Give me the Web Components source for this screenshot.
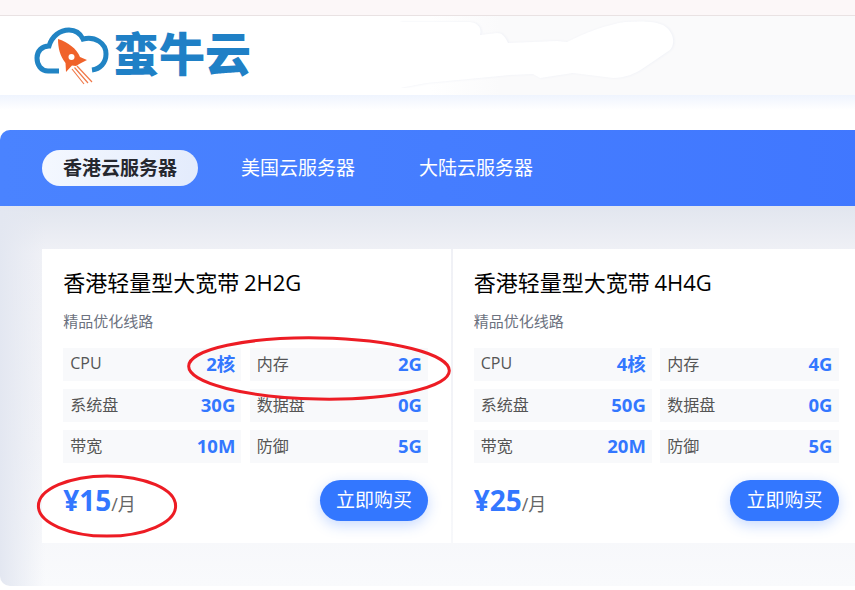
<!DOCTYPE html>
<html lang="zh">
<head>
<meta charset="utf-8">
<title>蛮牛云</title>
<style>
  html, body { margin: 0; padding: 0; background: #fff; overflow: hidden; }
  body { width: 855px; height: 590px; font-family: "Open Sans", "Noto Sans CJK SC", sans-serif; }
</style>
</head>
<body>
<site-header></site-header>
<plan-panel>
  <plan-card slot="cards" name="香港轻量型大宽带 2H2G" cpu="2核" ram="2G" disk="30G" band="10M" price="15"></plan-card>
  <plan-card slot="cards" name="香港轻量型大宽带 4H4G" cpu="4核" ram="4G" disk="50G" band="20M" price="25"></plan-card>
</plan-panel>
<pen-ring tilt="1" style="left:186px;top:335.5px;width:266px;height:65px"></pen-ring>
<pen-ring style="left:37px;top:473.5px;width:140px;height:64px"></pen-ring>

<script>
class SiteHeader extends HTMLElement {
  constructor() {
    super();
    this.shadowDOM = this.attachShadow({ mode: 'open' });
  }
  connectedCallback() {
    this.shadowDOM.innerHTML = `
      <style>
        :host { display: block; position: relative; }
        .strip { height: 15px; background: #fcf7f8; border-bottom: 1px solid #e9e2e3; }
        .bar {
          height: 79px;
          display: flex;
          align-items: flex-start;
          background: linear-gradient(90deg, #fff 0, #fff 430px, #fafafb 500px, #fafafb 100%);
        }
        .logo { display: flex; align-items: flex-start; margin-left: 33px; margin-top: 10px; }
        .logo svg { display: block; }
        .name {
          margin-top: -1px;
          font: 900 46px/52px "Noto Sans CJK SC", sans-serif;
          color: #1f80c6;
          white-space: nowrap;
        }
        .glow { height: 15px; background: linear-gradient(#eff4fe, #fff); }
        .blot { position: absolute; left: 400px; top: 16px; }
      </style>
      <div class="strip"></div>
      <div class="bar">
        <div class="logo">
          <svg width="80" height="60" viewBox="33 26 80 60" fill="none">
            <path d="M59 71H48C41 71 37 65 37 58C37 51 42 46 49 46C52 36 60 30 69 30C75 30 80 33 83 39C95 36 106 43 106 54C106 63 100 69 92 70" stroke="#2184c4" stroke-width="5"/>
            <path d="M58 39C68 42 77 49 80 57L87 60C83 62 79 64 76 66L72 65.5L66 72L65.5 63C60 56 58 48 58 39Z" fill="#f0622a"/>
            <circle cx="71.500" cy="57" r="3" fill="#fff"/>
            <path d="M77 66L92 82M74.500 67.500L88 83M72 69L84 84" stroke="#f0794a" stroke-width="1.2"/>
          </svg>
          <span class="name">蛮牛云</span>
        </div>
      </div>
      <svg class="blot" width="280" height="72" viewBox="400 16 280 72">
        <path d="M400 88L427 83L510 75L533 74L540 78L573 73L613 78C625 78 635 74 645 67L670 50C675 45 675 32 663 25C655 21 640 21 625 22C605 25 585 33 567 42L557 41L508 43C505 36 502 33 497 33L480 35C482 28 478 23 470 22L400 22Z" fill="#fff" style="filter:drop-shadow(1px 0 1px #eef0f6)"/>
      </svg>
      <div class="glow"></div>
    `;
  }
}

class PlanPanel extends HTMLElement {
  constructor() {
    super();
    this.shadowDOM = this.attachShadow({ mode: 'open' });
  }
  connectedCallback() {
    this.shadowDOM.innerHTML = `
      <style>
        :host {
          display: block;
          width: 880px;
          margin-top: 20px;
          height: 455.5px;
          border-radius: 10px;
          overflow: hidden;
          background:
            linear-gradient(90deg, #e3e7f1, rgba(227, 231, 241, 0) 45px),
            linear-gradient(#e2e6ef 17%, #f0f1f6 27%, #f3f4f8 70%, #f9fafc 100%);
        }
        .tabs {
          display: flex;
          gap: 22px;
          padding: 20px 42px;
          background: linear-gradient(90deg, #4a83ff, #4077ff);
        }
        .tab {
          height: 36px;
          padding: 0 21px;
          border-radius: 18px;
          font-size: 19px;
          line-height: 36px;
          color: #fff;
          white-space: nowrap;
        }
        .tab.active {
          font-weight: 700;
          color: #26282f;
          background: linear-gradient(100deg, #f4f8ff, #e3ebfc);
        }
        .cards { display: flex; gap: 2px; padding: 43px 0 0 42px; }
      </style>
      <div class="tabs">
        <div class="tab active">香港云服务器</div>
        <div class="tab">美国云服务器</div>
        <div class="tab">大陆云服务器</div>
      </div>
      <div class="cards"><slot name="cards"></slot></div>
    `;
  }
}

class SpecCell extends HTMLElement {
  constructor() {
    super();
    this.shadowDOM = this.attachShadow({ mode: 'open' });
  }
  connectedCallback() {
    this.shadowDOM.innerHTML = `
      <style>
        :host {
          display: flex;
          align-items: center;
          justify-content: space-between;
          box-sizing: border-box;
          height: 32.7px;
          padding: 0 6px 2px 7px;
          background: #f8f9fb;
          font-size: 16px;
          color: #555;
        }
        b { font-size: 18.5px; font-weight: 700; color: #3377ff; }
      </style>
      <span><slot></slot></span>
      <b>${this.getAttribute('value')}</b>
    `;
  }
}

class PlanCard extends HTMLElement {
  constructor() {
    super();
    this.shadowDOM = this.attachShadow({ mode: 'open' });
  }
  connectedCallback() {
    const a = (k) => this.getAttribute(k);
    this.shadowDOM.innerHTML = `
      <style>
        :host {
          display: block;
          flex: none;
          box-sizing: border-box;
          width: 408.500px;
          height: 294px;
          padding: 19px 22.500px 0 21.2px;
          background: #fff;
        }
        h3 { margin: 0; font-size: 22px; line-height: 28px; font-weight: 400; color: #000; white-space: nowrap; word-spacing: -1px; }
        p { margin: 15px 0 0; font-size: 15px; line-height: 20px; color: #6c7280; }
        .specs {
          display: grid;
          grid-template-columns: 1fr 1fr;
          gap: 8.3px 8.5px;
          margin-top: 17px;
        }
        .foot { display: flex; align-items: center; justify-content: space-between; margin-top: 17px; }
        .price { font-size: 18px; color: #666; margin-top: -1px; }
        .price b { font-size: 28px; font-weight: 700; color: #3377ff; }
        .buy {
          height: 41px;
          padding: 0 16px;
          border-radius: 21px;
          background: #3377ff;
          box-shadow: 0 4px 14px rgba(51, 119, 255, .28);
          font-size: 19px;
          line-height: 41px;
          color: #fff;
        }
      </style>
      <h3>${a('name')}</h3>
      <p>精品优化线路</p>
      <div class="specs">
        <spec-cell value="${a('cpu')}">CPU</spec-cell>
        <spec-cell value="${a('ram')}">内存</spec-cell>
        <spec-cell value="${a('disk')}">系统盘</spec-cell>
        <spec-cell value="0G">数据盘</spec-cell>
        <spec-cell value="${a('band')}">带宽</spec-cell>
        <spec-cell value="5G">防御</spec-cell>
      </div>
      <div class="foot">
        <div class="price"><b>¥${a('price')}</b>/月</div>
        <div class="buy">立即购买</div>
      </div>
    `;
  }
}

// hand drawn red marks on top of the screenshot
class PenRing extends HTMLElement {
  constructor() {
    super();
    this.shadowDOM = this.attachShadow({ mode: 'open' });
  }
  connectedCallback() {
    const tilt = this.getAttribute('tilt') || 0;
    this.shadowDOM.innerHTML = `
      <style>
        :host { display: block; position: absolute; pointer-events: none; transform: rotate(${tilt}deg); }
        svg { display: block; width: 100%; height: 100%; overflow: visible; }
      </style>
      <svg viewBox="0 0 100 100" preserveAspectRatio="none" fill="none">
        <ellipse cx="50" cy="50" rx="49" ry="47" stroke="#ed1c24" stroke-width="3" vector-effect="non-scaling-stroke"/>
      </svg>
    `;
  }
}

customElements.define('site-header', SiteHeader);
customElements.define('plan-panel', PlanPanel);
customElements.define('spec-cell', SpecCell);
customElements.define('plan-card', PlanCard);
customElements.define('pen-ring', PenRing);
</script>
</body>
</html>
